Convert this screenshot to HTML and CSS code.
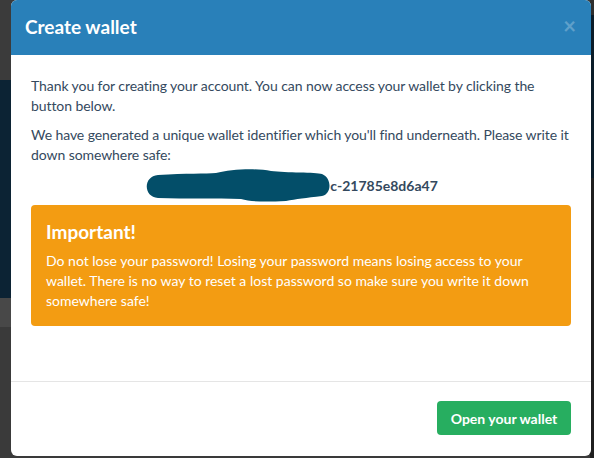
FILE: index.html
```html
<!DOCTYPE html>
<html lang="en">
<head>
<meta charset="utf-8">
<title>Create wallet</title>
<link rel="stylesheet" href="styles.css">
</head>
<body>
<div class="modal">
  <div class="modal-header">
    <h4 class="modal-title">Create wallet</h4>
    <span class="close">&times;</span>
  </div>
  <div class="modal-body">
    <p>Thank you for creating your account. You can now access your wallet by clicking the button below.</p>
    <p>We have generated a unique wallet identifier which you'll find underneath. Please write it down somewhere safe:</p>
    <p class="identifier"><span class="redacted"><svg width="184" height="34" viewBox="0 0 184 34"><path d="M12 7 C40 5 60 6 70 5 C85 1 110 0 125 3 C140 5 170 4 176 6 C186 10 186 26 176 28 C160 30 150 31 140 33 C120 34 105 34 95 31 C70 30 40 31 12 30 C-3 29 -3 8 12 7 Z" fill="#034e69"/></svg></span>c-21785e8d6a47</p>
    <div class="alert">
      <h4 class="alert-title">Important!</h4>
      <p>Do not lose your password! Losing your password means losing access to your wallet. There is no way to reset a lost password so make sure you write it down somewhere safe!</p>
    </div>
  </div>
  <div class="modal-footer">
    <button class="btn">Open your wallet</button>
  </div>
</div>
</body>
</html>
```

FILE: styles.css
```css
html, body {
  margin: 0;
  padding: 0;
}
body {
  width: 594px;
  height: 458px;
  overflow: hidden;
  font-family: Lato, "Open Sans", sans-serif;
  background:
    linear-gradient(to bottom, #2e2e2e 0, #2e2e2e 15px, #0b1c29 15px, #0b1c29 178px, #1f1f1f 178px) right top / 4px 100% no-repeat,
    linear-gradient(to bottom, #3b3b3b 0, #3b3b3b 80px, #0c2334 80px, #0c2334 298px, #484848 298px, #484848 327px, #3a3a3a 327px);
}
.modal {
  margin-left: 11px;
  width: 580px;
  background: #fff;
  border-radius: 6px;
  overflow: hidden;
}
.modal-header {
  height: 55px;
  background: #2980b9;
  display: flex;
  align-items: center;
  justify-content: space-between;
  padding: 0 15px 0 14px;
  box-sizing: border-box;
}
.modal-title {
  margin: 0;
  color: #fff;
  font-size: 19px;
  font-weight: 700;
  padding-bottom: 2px;
}
.close {
  color: #fff;
  opacity: 0.25;
  font-size: 22px;
  font-weight: 700;
  line-height: 1;
  padding-bottom: 4px;
}
.modal-body {
  padding: 21px 20px 55px;
  color: #34495e;
  font-size: 14px;
  line-height: 20px;
  letter-spacing: -0.08px;
}
.modal-body p {
  margin: 0 0 9px;
}
.identifier {
  text-align: center;
  font-weight: 700;
  color: #34495e;
  padding-top: 2px;
  letter-spacing: 0;
}
.redacted {
  display: inline-block;
  width: 166px;
  height: 20px;
  position: relative;
  vertical-align: top;
}
.redacted svg {
  position: absolute;
  left: -18px;
  top: -8px;
}
.alert {
  background: #f39c12;
  border-radius: 4px;
  color: #fff;
  padding: 15px 15px 15px;
  margin-top: 9px;
  letter-spacing: 0;
}
.alert-title {
  margin: 0 0 7px;
  font-size: 19px;
  font-weight: 700;
  line-height: 24px;
}
.modal-body .alert p {
  margin: 0;
}
.modal-footer {
  border-top: 1px solid #e5e5e5;
  padding: 19px 20px 21px;
  display: flex;
  justify-content: flex-end;
}
.btn {
  background: #27ae60;
  color: #fff;
  border: none;
  border-radius: 4px;
  font-family: Lato, "Open Sans", sans-serif;
  font-weight: 700;
  font-size: 14px;
  height: 34px;
  width: 134px;
  padding: 0;
}
```
